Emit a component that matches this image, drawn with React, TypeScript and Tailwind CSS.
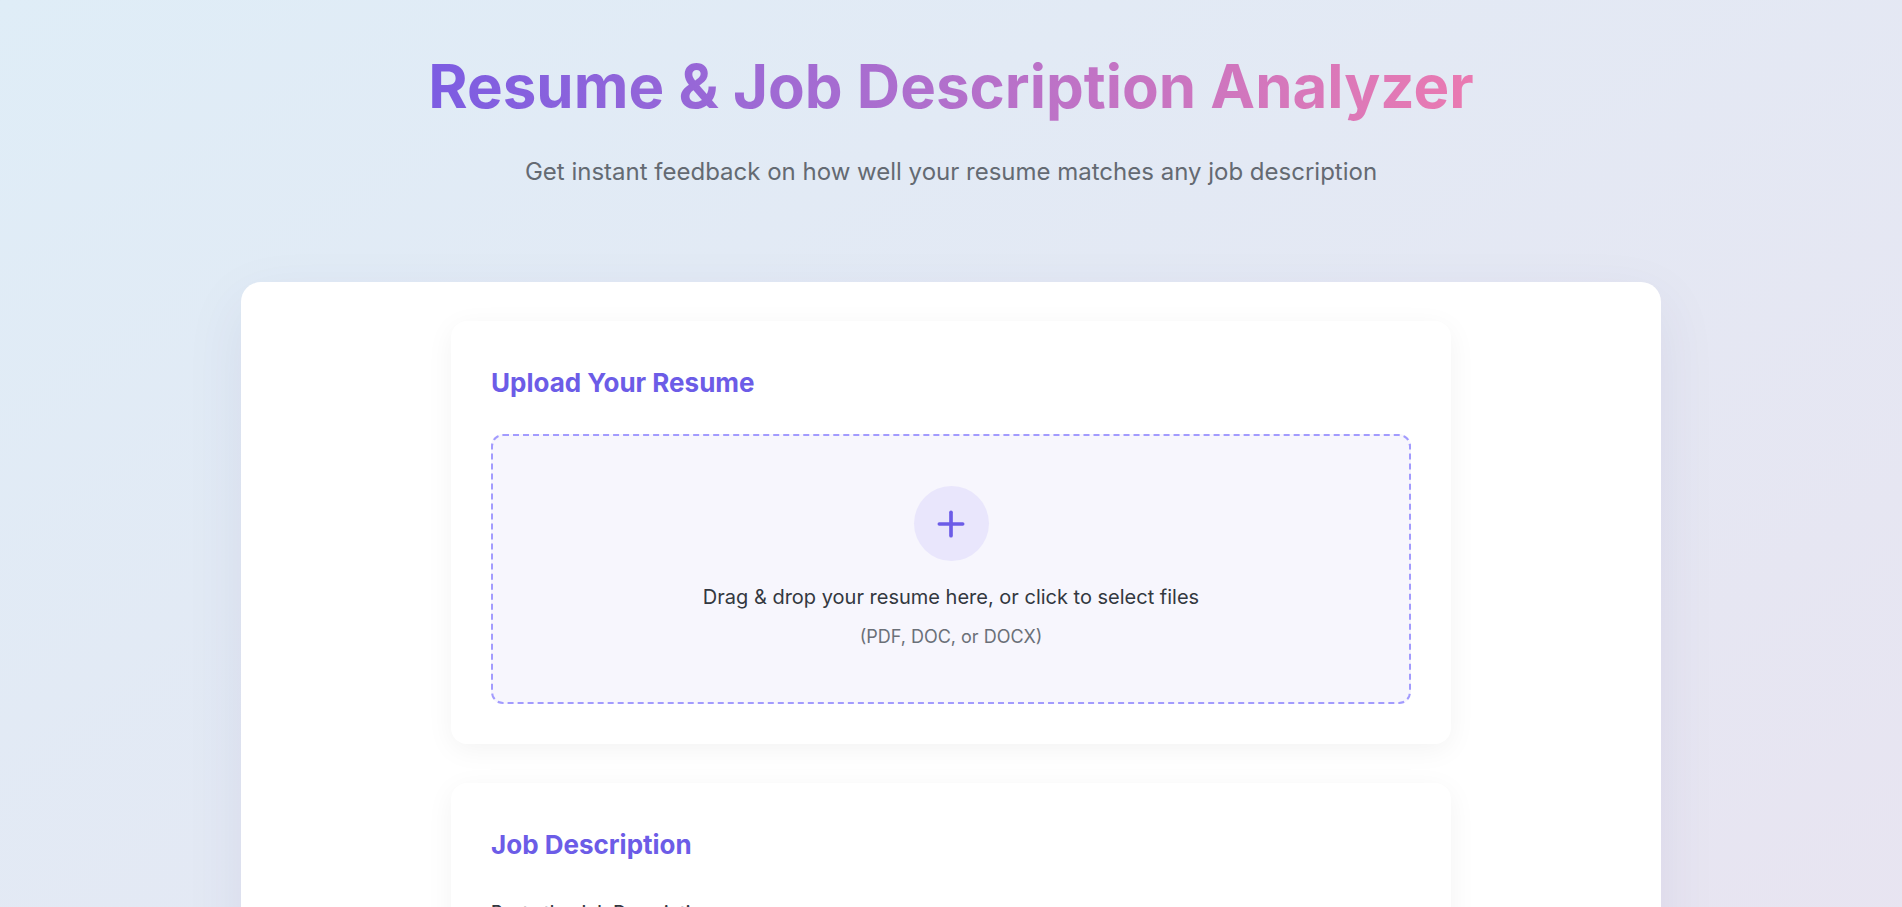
import { Plus } from "lucide-react";

function UploadCard() {
  return (
    <div className="rounded-2xl bg-white px-10 pb-10 pt-[46px] shadow-[0_6px_28px_rgba(0,0,0,0.05)]">
      <h2 className="mb-[36px] text-[26px] font-bold leading-[1.2] text-[#6c5ce7]">Upload Your Resume</h2>
      <div className="flex h-[270px] flex-col items-center rounded-xl border-2 border-dashed border-[#a29bfe] bg-[#f7f6fd] pt-[50px]">
        <div className="flex h-[75px] w-[75px] items-center justify-center rounded-full bg-[#e9e6fc]">
          <Plus size={40} strokeWidth={2.2} className="text-[#6c5ce7]" />
        </div>
        <p className="mt-[21px] text-[20px] leading-[1.5] text-[#333840]">
          Drag &amp; drop your resume here, or click to select files
        </p>
        <p className="mt-[11px] text-[18px] leading-[1.5] text-[#6b7078]">(PDF, DOC, or DOCX)</p>
      </div>
    </div>
  );
}

function JobCard() {
  return (
    <div className="rounded-2xl bg-white px-10 pb-10 pt-[46px] shadow-[0_6px_28px_rgba(0,0,0,0.05)]">
      <h2 className="mb-[39px] text-[26px] font-bold leading-[1.2] text-[#6c5ce7]">Job Description</h2>
      <label className="block text-[18px] font-medium leading-[1.5] text-[#333840]">Paste the Job Description</label>
      <textarea className="mt-3 h-[220px] w-full rounded-xl border border-[#dcdcf0] bg-white p-4" />
    </div>
  );
}

export default function App() {
  return (
    <div
      className="min-h-screen overflow-hidden bg-linear-to-br from-[#dfedf7] to-[#e9e3f0] pt-[50px]"
      style={{ fontFamily: "Inter, 'Noto Sans', sans-serif" }}
    >
      <header className="flex flex-col items-center">
        <h1 className="inline-block bg-linear-to-r from-[#7c5ce2] to-[#ea7ab1] bg-clip-text text-[60px] font-bold leading-[1.2] text-transparent">
          Resume &amp; Job Description Analyzer
        </h1>
        <p className="mt-[32px] text-[24px] leading-[1.5] text-[#646a72]">
          Get instant feedback on how well your resume matches any job description
        </p>
      </header>

      <main className="mx-auto mt-[92px] w-[1420px] rounded-[20px] bg-white pt-[39px] pb-10 shadow-[0_20px_60px_rgba(60,50,120,0.08)]">
        <div className="mx-auto flex w-[1000px] flex-col gap-[39px]">
          <UploadCard />
          <JobCard />
        </div>
      </main>
    </div>
  );
}
